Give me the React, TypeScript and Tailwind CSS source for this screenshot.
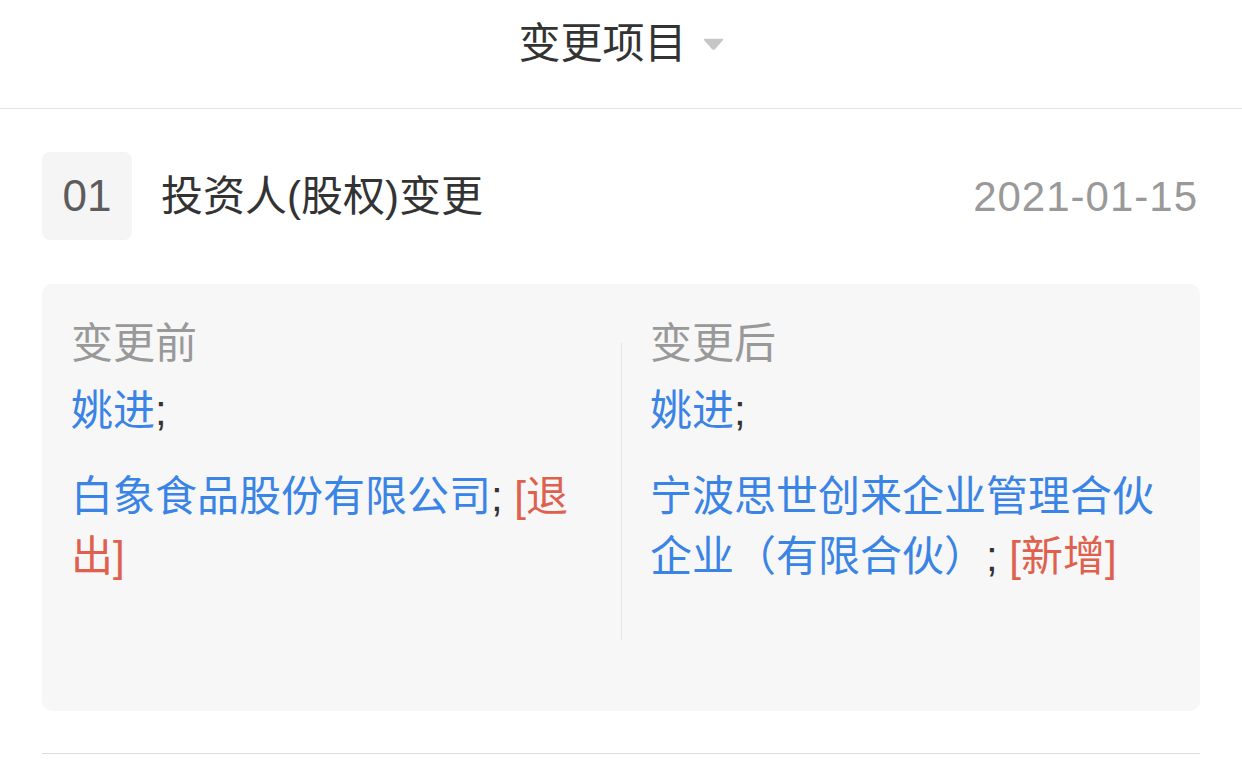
const font = { fontFamily: '"Liberation Sans", "Noto Sans CJK SC", sans-serif' }

function Caret() {
  return (
    <svg width="21" height="12" viewBox="0 0 21 12" className="block">
      <path d="M1.5 1.5 L19.5 1.5 L11.6 10.4 Q10.5 11.6 9.4 10.4 Z" fill="#c6c6c6" stroke="#c6c6c6" strokeWidth="1.5" strokeLinejoin="round" />
    </svg>
  )
}

function Entry({ name, tag, wrap }: { name: string; tag?: string; wrap?: boolean }) {
  return (
    <p className={`leading-[60px] ${wrap ? 'mt-[26px]' : ''}`}>
      <span className="text-[#3a84e6]">{name}</span>
      <span className="text-[#333]">;</span>
      {tag && <span className="text-[#e0604e]">{tag}</span>}
    </p>
  )
}

export default function App() {
  return (
    <div className="w-[1242px] min-h-[771px] bg-white text-[42px]" style={font}>
      {/* header */}
      <div className="h-[109px] pt-[14px] border-b border-[#e3e3e3] flex justify-center">
        <div className="flex items-center h-[60px] gap-[16px]">
          <span className="text-[#333] leading-[60px]">变更项目</span>
          <Caret />
        </div>
      </div>

      <div className="px-[42px]">
        {/* title row */}
        <div className="mt-[43px] flex items-center">
          <div className="w-[90px] h-[88px] rounded-[8px] bg-[#f5f5f5] flex items-center justify-center text-[44px] text-[#5c5c5c]">
            01
          </div>
          <div className="ml-[29px] flex-1 text-[#333]">投资人(股权)变更</div>
          <div className="text-[#999] pr-[2px] tracking-[1px]">2021-01-15</div>
        </div>

        {/* change card */}
        <div className="mt-[44px] rounded-[10px] bg-[#f7f7f7] pt-[30px] pb-[71px] pl-[29px] pr-[32px] flex">
          <div className="w-[550px] pr-[30px]">
            <p className="text-[#999] leading-[60px] mb-[7px]">变更前</p>
            <Entry name="姚进" />
            <Entry name="白象食品股份有限公司" tag=" [退出]" wrap />
          </div>
          <div className="self-start mt-[29px] w-px h-[297px] bg-[#e4e4e4]" />
          <div className="flex-1 pl-[28px]">
            <p className="text-[#999] leading-[60px] mb-[7px]">变更后</p>
            <Entry name="姚进" />
            <Entry name="宁波思世创来企业管理合伙企业（有限合伙）" tag=" [新增]" wrap />
          </div>
        </div>

        <div className="mt-[42px] h-px bg-[#dcdcdc]" />
      </div>
    </div>
  )
}
